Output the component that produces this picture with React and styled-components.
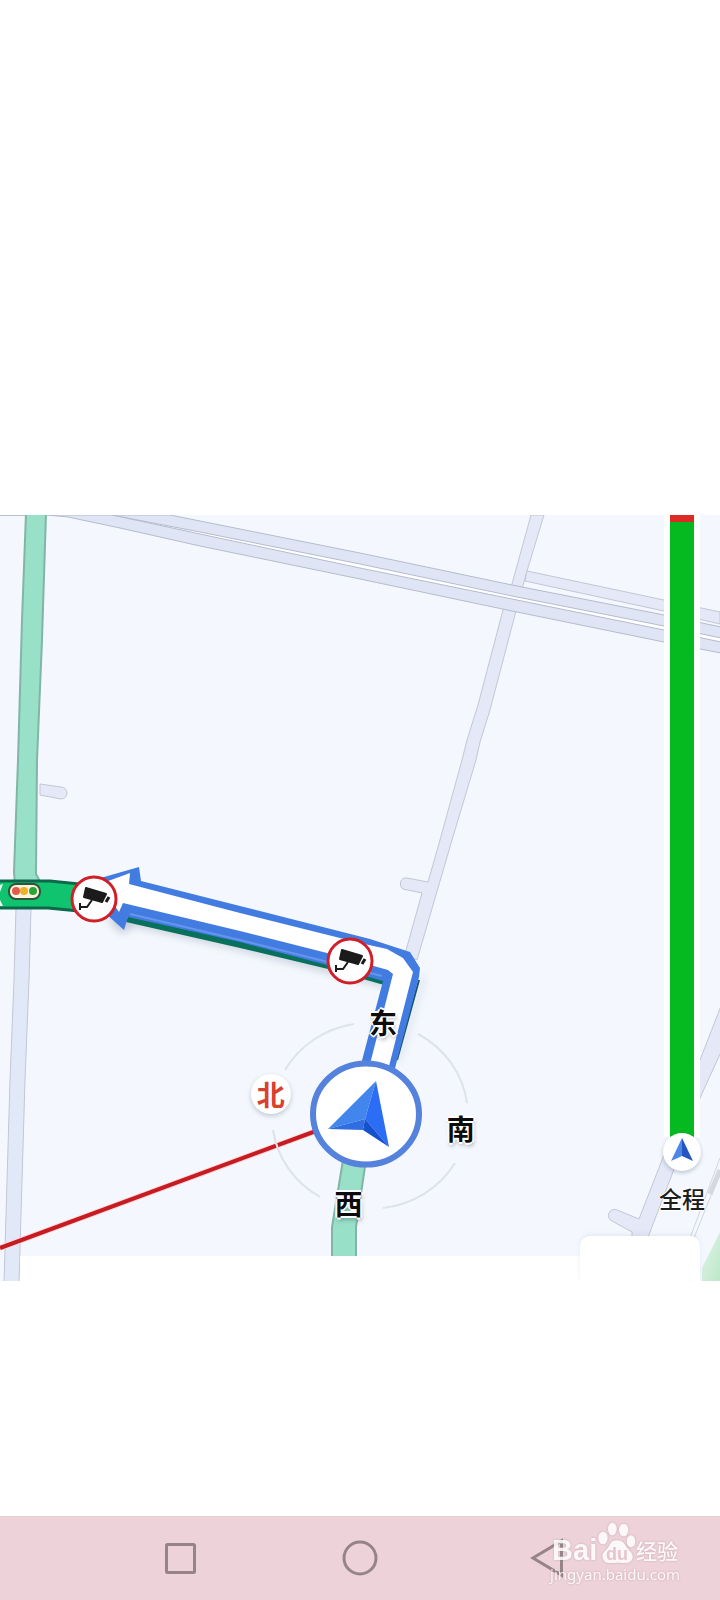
import styled, { createGlobalStyle } from "styled-components"

export default function App() {
    return (
        <>
            <GlobalStyle />
            <Page>
                <MapArea>
                    <MapDrawing />
                    <Direction $x={53.2} $y={66.2}>东</Direction>
                    <Direction $x={64} $y={80}>南</Direction>
                    <Direction $x={48.4} $y={89.8}>西</Direction>
                    <Direction $x={37.6} $y={75.6} $north>北</Direction>
                    <BottomSheet />
                    <SheetTab />
                    <Overview>
                        <Track>
                            <Jam />
                            <Clear />
                        </Track>
                        <OverviewButton type="button" aria-labelledby="overview-label">
                            <svg width="24" height="24" viewBox="0 0 24 24" aria-hidden="true">
                                <path d="M12 0 1 23l11-5z" fill="#4b87e6" />
                                <path d="m12 0 11 23-11-5z" fill="#2453c4" />
                            </svg>
                        </OverviewButton>
                        <OverviewLabel id="overview-label">全程</OverviewLabel>
                    </Overview>
                </MapArea>
                <NavBar>
                    <NavButton type="button" aria-label="Recent apps">
                        <svg width="48" height="48" viewBox="0 0 48 48">
                            <rect x="10.5" y="9.5" width="28" height="28" rx="1" />
                        </svg>
                    </NavButton>
                    <NavButton type="button" aria-label="Home">
                        <svg width="48" height="48" viewBox="0 0 48 48">
                            <circle cx="24" cy="23" r="16" />
                        </svg>
                    </NavButton>
                    <NavButton type="button" aria-label="Back">
                        <svg width="48" height="48" viewBox="0 0 48 48">
                            <path d="M45.500 6v34L17 23z" />
                        </svg>
                    </NavButton>
                    <Watermark href="#">
                        <Brand>
                            <BrandLatin>Bai</BrandLatin>
                            <Paw />
                            <BrandHan>经验</BrandHan>
                        </Brand>
                        <Site>jingyan.baidu.com</Site>
                    </Watermark>
                </NavBar>
            </Page>
        </>
    )
}

const MapDrawing = () => {
    return (
        <MapSvg viewBox="0 515 720 766" aria-hidden="true">
            <defs>
                <filter id="soft" x="-20%" y="-20%" width="140%" height="140%">
                    <feGaussianBlur stdDeviation="4" />
                </filter>
                <linearGradient id="park" x1="0" y1="0" x2="1" y2="1">
                    <stop offset="0" stopColor="#e2f4e8" />
                    <stop offset="1" stopColor="#bce8c8" />
                </linearGradient>
            </defs>

            {/* minor roads */}
            <g fill="#e4e8f7" stroke="#c3c6d4" strokeWidth="1">
                <path d="M531 515 512 584 503 610 478 705 467 740 462 760 440 840 428 882 407 878A6 6 0 0 0 403 889L422 893 405 954 417 960 452 840 476 760 480 742 490 710 516 611 527 571 544 515z" />
                <path d="M527 571 664 600 720 612V624L664 611 525 581z" />
                <path d="M40 784 61 787A6 6 0 0 1 61 799L40 795z" />
                <path d="M16 908 14 980 10 1080 4 1283H19L25 1080 29 980 31 908z" fill="#e1e8f8" />
                <path d="M721 1006 700 1060 662 1160 639 1219 617 1210A6 6 0 0 0 612 1221L632 1232V1245H645L673 1172 700 1098 721 1052z" />
            </g>
            <path d="M720 1158 690 1238M720 1173 694 1238" fill="none" stroke="#d0d4df" />
            <path d="m720 1170-10 24" stroke="#d5d8e1" strokeWidth="5" />
            <path d="M720 1232 702 1268V1281H720z" fill="url(#park)" />

            {/* dual carriageway */}
            <path d="M190 532 360 566 512 597 720 640" fill="none" stroke="#fff" strokeWidth="4" />
            <g fill="#dfe5f4" stroke="#b4bccd" strokeWidth="1">
                <path d="M170 515 360 553 512 585 664 615 721 627V638L664 626 512 596 360 564 200 532 112 515z" />
                <path d="M47 515 68 517 120 528 200 546 360 579 512 611 664 642 721 653V642L664 630 512 599 360 568 200 534 112 515z" />
            </g>
            <path d="M0 515.500H25" stroke="#b7c4c9" />

            {/* green roads */}
            <g fill="#98e0c8" stroke="#82b5a6" strokeWidth="2">
                <path d="M26 513 22 620 18 760 14 872 15 885H42L36 874 37 760 42 640 46 513z" />
                <path d="M343 1160 334 1215 332 1227V1258H356V1227L366 1160z" />
            </g>
            <rect x="325" y="1256" width="38" height="6" fill="#fff" />

            {/* travelled route under the arrow */}
            <path d="M-3 881H50L90 885V912L48 908H-3z" fill="#10c46f" stroke="#0b684b" strokeWidth="3" />
            <path d="M0 885 3 884 0 892V900L3 906H0z" fill="#e9fff4" />
            <path d="M106 918 122 934 134 926 240 950 385 987 388 980 130 916z" fill="#526080" opacity=".3" filter="url(#soft)" />
            <path d="m424 976-26 86" stroke="#526080" strokeWidth="3" opacity=".25" filter="url(#soft)" />
            <path d="M126 922 240 948 328 969 384 985 390 973 130 910z" fill="#08705b" />
            <path d="m419 980-22 80" stroke="#17566e" strokeWidth="2" />

            {/* turn arrow */}
            <path d="M90 881 139 867 141 881 240 906 370 939 410 952 420 968 419 977 394 1072 360 1068 383 981 327 965 240 942 128 917 124 930 106 914z" fill="#437ce0" />
            <path d="m130 914 110 26 88 22 54 14" fill="none" stroke="#6695ed" strokeWidth="2" />
            <path d="M100 884 130 873 129 884 240 913 360 943 387 949 403 958 413 972 388 1070 369 1068 393 974 388 970 327 953 240 931 123 903 119 912z" fill="#fff" />

            {/* bearing line and compass */}
            <path d="M0 1248 316 1131" stroke="#ffd7d7" strokeWidth="6" />
            <path d="M0 1248 316 1131" stroke="#c61b23" strokeWidth="4" />
            <g fill="none" stroke="#dce4e9" strokeWidth="2">
                <path d="M285 1070A97 93 0 0 1 354 1024" />
                <path d="M418 1034A97 93 0 0 1 467 1103" />
                <path d="M273 1130A97 93 0 0 0 320 1197" />
                <path d="M455 1163A97 93 0 0 1 383 1208" />
            </g>
            <ellipse cx="366" cy="1114" rx="53" ry="50.500" fill="#fff" stroke="#5482dc" strokeWidth="6" />
            <path d="M376 1081 328 1129 365 1119z" fill="#4286ed" />
            <path d="M376 1081 365 1119 389 1147z" fill="#2c6df6" />
            <path d="M328 1129 365 1119 363 1130z" fill="#2f6ee0" />
            <path d="M365 1119 389 1147 363 1130z" fill="#1651cd" />

            {/* traffic light */}
            <rect x="9" y="884" width="31" height="15" rx="7" fill="#fbf4dc" stroke="#31523c" strokeWidth="2" />
            <circle cx="16" cy="891" r="4" fill="#e25b4e" />
            <circle cx="24" cy="891" r="4" fill="#efb12c" />
            <circle cx="33" cy="891" r="4" fill="#2da534" />

            <Camera x={94} y={899} />
            <Camera x={350} y={961} />
        </MapSvg>
    )
}

const Camera = ({ x, y }) => (
    <g transform={`translate(${x} ${y})`}>
        <circle r="22" fill="#fff" stroke="#d01f29" strokeWidth="3" />
        <path d="M-8-11 12-5 8 3-10-2z" fill="#1b1b1b" stroke="#1b1b1b" strokeWidth="2" strokeLinejoin="round" />
        <path d="m15-2-3 5" stroke="#1b1b1b" strokeWidth="3" />
        <path d="M-2 1-7 8H-13M-14 4V11" fill="none" stroke="#1b1b1b" strokeWidth="2" />
    </g>
)

const Paw = () => (
    <svg width="38" height="41" viewBox="0 0 114 123" aria-hidden="true">
        <g fill="#fff">
            <ellipse cx="15" cy="48" rx="14" ry="19" />
            <ellipse cx="43" cy="21" rx="13" ry="19" />
            <ellipse cx="77" cy="24" rx="14" ry="19" />
            <ellipse cx="99" cy="58" rx="13" ry="18" />
            <path d="M56 55c-20 0-20 18-31 28C12 94 11 101 15 111c7 17 24 11 43 11s33 6 43-7c8-13 0-23-9-32C80 70 78 55 56 55z" />
        </g>
        <text x="57" y="113" textAnchor="middle" fill="#e6c3cc" fontFamily="Liberation Sans, sans-serif" fontWeight="700" fontSize="54">du</text>
    </svg>
)

const GlobalStyle = createGlobalStyle`
    * {
        box-sizing: border-box;
    }

    body {
        margin: 0;
        background: #fff;
        font-family: "Noto Sans CJK SC", sans-serif;
    }
`

const Page = styled.main`
    display: flex;
    flex-direction: column;
    min-height: 100vh;
    padding-top: 515px;
`

const MapArea = styled.section`
    position: relative;
    background: #f4f8fe;
    overflow: hidden;
`

const MapSvg = styled.svg`
    display: block;
    width: 100%;
    height: auto;
`

const Direction = styled.span`
    position: absolute;
    left: ${({ $x }) => $x}%;
    top: ${({ $y }) => $y}%;
    transform: translate(-50%, -50%);
    width: 40px;
    border-radius: 50%;
    font-size: 28px;
    font-weight: 700;
    line-height: 40px;
    text-align: center;
    color: ${({ $north }) => ($north ? "#d8402f" : "#0c0c0c")};
    background: ${({ $north }) => ($north ? "#fff" : "none")};
    box-shadow: ${({ $north }) => ($north ? "0 2px 5px rgba(70, 80, 110, 0.3)" : "none")};
    text-shadow: ${({ $north }) =>
        $north ? "none" : "2px 0 #fff, -2px 0 #fff, 0 2px #fff, 0 -2px #fff, 1px 3px 4px rgba(60, 60, 80, 0.5)"};
`

const BottomSheet = styled.div`
    position: absolute;
    left: 20px;
    right: 20px;
    bottom: 0;
    height: 25px;
    background: #fff;
`

const SheetTab = styled.div`
    position: absolute;
    right: 20px;
    bottom: 0;
    width: 120px;
    height: 45px;
    border-radius: 10px 10px 0 0;
    background: #fff;
    box-shadow: 0 -2px 5px rgba(120, 130, 160, 0.12);
`

const Overview = styled.div`
    position: absolute;
    top: 0;
    right: 0;
    width: 76px;
    height: 91%;
    display: flex;
    flex-direction: column;
    align-items: center;
`

const Track = styled.div`
    flex: 1;
    display: flex;
    flex-direction: column;
    width: 36px;
    padding: 0 6px;
    background: #fdfffb;
`

const Jam = styled.div`
    height: 7px;
    background: #dc2b25;
`

const Clear = styled.div`
    flex: 1;
    background: #04ba20;
`

const OverviewButton = styled.button`
    display: flex;
    align-items: center;
    justify-content: center;
    width: 38px;
    height: 38px;
    margin-top: -4px;
    padding: 0 0 4px;
    border: 0;
    border-radius: 50%;
    background: #fff;
    box-shadow: 0 2px 4px rgba(70, 80, 110, 0.3);
`

const OverviewLabel = styled.span`
    margin: 15px 0 2px;
    font-size: 23px;
    font-weight: 500;
    line-height: 24px;
    color: #1d1d1d;
    text-shadow: 1px 0 #fff, -1px 0 #fff, 0 1px #fff, 0 -1px #fff;
`

const NavBar = styled.nav`
    position: relative;
    display: flex;
    align-items: center;
    height: 84px;
    margin-top: auto;
    padding: 0 12.5%;
    border-top: 1px solid #e3d0d5;
    background: #edd2d9;
`

const NavButton = styled.button`
    flex: 1;
    display: flex;
    justify-content: center;
    padding: 0;
    border: 0;
    background: none;

    svg {
        fill: none;
        stroke: #968489;
        stroke-width: 3;
    }
`

const Watermark = styled.a`
    position: absolute;
    top: 5px;
    right: 40px;
    color: #fff;
    text-decoration: none;
    opacity: 0.85;
    filter: drop-shadow(0 0 1px rgba(150, 110, 125, 0.5));
`

const Brand = styled.div`
    display: flex;
    align-items: flex-end;
    justify-content: space-between;
    padding: 0 2px;
`

const BrandLatin = styled.span`
    font-family: "Liberation Sans", sans-serif;
    font-size: 29px;
    font-weight: 700;
    line-height: 26px;
`

const BrandHan = styled.span`
    font-size: 21px;
    font-weight: 500;
    line-height: 26px;
`

const Site = styled.div`
    font-family: "Noto Sans", sans-serif;
    font-size: 15px;
    line-height: 22px;
`
